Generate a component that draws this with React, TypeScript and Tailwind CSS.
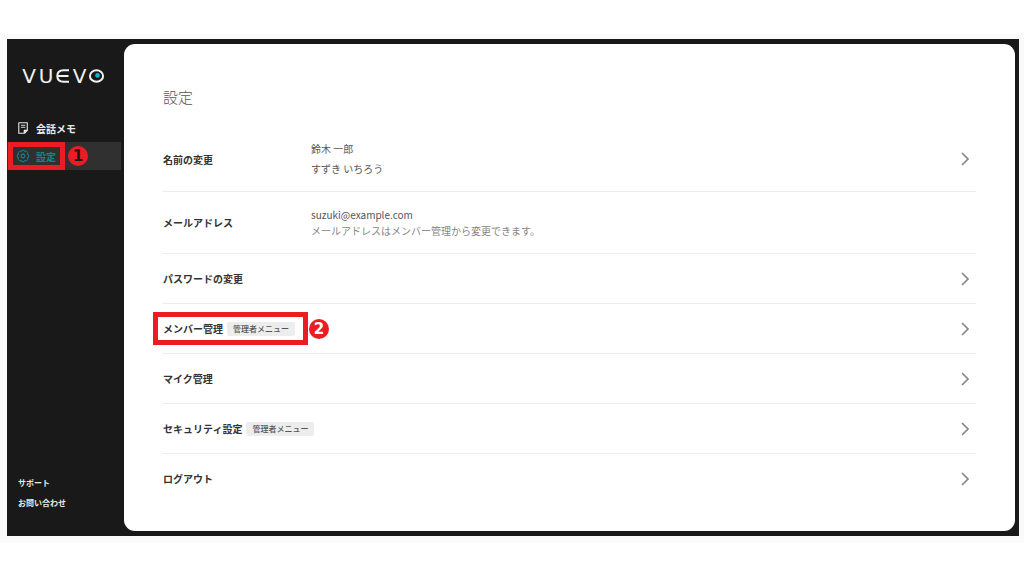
import type { ReactNode } from 'react';

interface SettingItem {
  id: string;
  label: string;
  admin?: boolean;
  marked?: boolean;
}

const items: SettingItem[] = [
  { id: 'password', label: 'パスワードの変更' },
  { id: 'members', label: 'メンバー管理', admin: true, marked: true },
  { id: 'mic', label: 'マイク管理' },
  { id: 'security', label: 'セキュリティ設定', admin: true },
  { id: 'logout', label: 'ログアウト' },
];

function Logo() {
  return (
    <svg viewBox="0 0 84 28" className="w-[84px] h-7 overflow-visible" role="img" aria-label="VUEVO">
      <g fill="#f1f1f1" fontFamily="DejaVu Sans" fontSize="20">
        <text x="8" y="21" textAnchor="middle">V</text>
        <text x="25" y="21" textAnchor="middle">U</text>
        <text x="58.500" y="21" textAnchor="middle">V</text>
      </g>
      <g fill="none" stroke="#f1f1f1" strokeWidth="2">
        <path d="M48 8.200H42.500Q36.300 8.200 36.300 14T42.500 19.800H48M36.300 14H47.500" />
        <ellipse cx="75.500" cy="14" rx="6.600" ry="5.800" />
      </g>
      <circle cx="76.500" cy="13.400" r="2.300" fill="#12b5cb" />
    </svg>
  );
}

function MemoIcon() {
  return (
    <svg viewBox="0 0 12 12" className="w-3 h-3 shrink-0" fill="none" stroke="currentColor" aria-hidden="true">
      <path d="M1.800 .700H10.300V8.300L7.500 11.300H1.800Z" strokeWidth="1.100" strokeLinejoin="round" />
      <path d="M4 3.300H8.300M4 5.300H8.300" strokeWidth=".9" />
      <path d="M7 11.300V8H10.300Z" fill="currentColor" strokeWidth=".6" />
    </svg>
  );
}

function GearIcon() {
  return (
    <svg viewBox="0 0 12 12" className="w-3 h-3 shrink-0 overflow-visible" fill="none" stroke="currentColor" aria-hidden="true">
      <path
        d="M4.800 .3H7.200L7.700 1.600 9.200 1 10.900 2.700 10.400 4.300 11.700 4.800V7.200L10.400 7.700 10.900 9.300 9.200 11 7.700 10.400 7.200 11.700H4.800L4.300 10.400 2.800 11 1.100 9.300 1.600 7.700 .3 7.200V4.800L1.600 4.300 1.100 2.700 2.800 1 4.300 1.600Z"
        strokeWidth="1"
        strokeLinejoin="round"
      />
      <circle cx="6" cy="6" r="1.900" strokeWidth="1.100" />
    </svg>
  );
}

function Chevron() {
  return (
    <svg viewBox="0 0 8 14" className="w-2 h-3.5 mr-[7px] shrink-0" fill="none" stroke="#858585" strokeWidth="1.600" aria-hidden="true">
      <path d="M1 1 7 7 1 13" />
    </svg>
  );
}

function AdminBadge() {
  return (
    <span className="rounded-xs bg-[#ededed] px-[6px] text-[8px] leading-[14px] font-medium text-[#555]">
      管理者メニュー
    </span>
  );
}

function Row({ children }: { children: ReactNode }) {
  return <li className="border-b border-[#ececec] last:border-b-0">{children}</li>;
}

export default function App() {
  return (
    <div className="min-h-screen bg-white pt-[34px] font-['Noto_Sans_CJK_JP','Noto_Sans',sans-serif]">
      <div className="bg-[#fafafa] pt-[5px] pr-[5px] pb-[7px] pl-[7px]">
        <div className="flex bg-[#191919] py-[5px] pr-[4px]">
          {/* Sidebar */}
          <aside className="flex w-[117px] shrink-0 flex-col pr-[3px] text-[#e8e8e8]">
            <a href="#top" className="mt-[18px] ml-[14px] self-start">
              <Logo />
            </a>
            <nav className="mt-6 text-[10px] font-bold">
              <a href="#memo" className="flex h-7 items-center gap-[7px] pl-[10px]">
                <MemoIcon />
                会話メモ
              </a>
              <a href="#settings" aria-current="page" className="relative flex h-7 items-center gap-[7px] bg-[#303030] pl-[10px] text-[#128490]">
                <GearIcon />
                設定
                <span className="absolute inset-y-0 left-px w-[57px] border-[5px] border-[#ec1c24]" />
                <span className="absolute top-1 left-[61px] size-5 rounded-full bg-[#ec1c24] text-center font-['DejaVu_Sans'] text-[15px] leading-5 font-bold text-[#241416]">
                  1
                </span>
              </a>
            </nav>
            <div className="mt-auto mb-[18px] flex flex-col pl-[11px] text-[8px] leading-5 font-bold">
              <a href="#support">サポート</a>
              <a href="#contact">お問い合わせ</a>
            </div>
          </aside>

          {/* Settings */}
          <main className="min-w-0 flex-1 rounded-[11px] bg-white pt-[41px] pr-[39px] pb-7 pl-[39px] text-[10px] text-[#333]">
            <h1 className="text-[15px] leading-6 font-light text-[#555]">設定</h1>
            <ul className="mt-[18px]">
              <Row>
                <button type="button" className="flex h-[64px] w-full items-center text-left">
                  <span className="w-[148px] shrink-0 font-bold">名前の変更</span>
                  <span className="flex flex-1 flex-col leading-5 text-[#555]">
                    <span>鈴木 一郎</span>
                    <span>すずき いちろう</span>
                  </span>
                  <Chevron />
                </button>
              </Row>
              <Row>
                <div className="flex h-[61px] items-center">
                  <span className="w-[148px] shrink-0 font-bold">メールアドレス</span>
                  <div className="flex-1 leading-4">
                    <p className="text-[#555]">suzuki@example.com</p>
                    <p className="text-[#858585]">メールアドレスはメンバー管理から変更できます。</p>
                  </div>
                </div>
              </Row>
              {items.map((item) => (
                <Row key={item.id}>
                  <button type="button" className="relative flex h-[49px] w-full items-center gap-1 text-left">
                    <span className="font-bold">{item.label}</span>
                    {item.admin && <AdminBadge />}
                    <span className="flex-1" />
                    <Chevron />
                    {item.marked && (
                      <>
                        <span className="absolute inset-y-2 -left-[10px] w-[155px] border-[5px] border-[#ec1c24]" />
                        <span className="absolute left-[146px] size-5 rounded-full bg-[#ec1c24] text-center font-['DejaVu_Sans'] text-[15px] leading-5 font-bold text-white">
                          2
                        </span>
                      </>
                    )}
                  </button>
                </Row>
              ))}
            </ul>
          </main>
        </div>
      </div>
    </div>
  );
}
